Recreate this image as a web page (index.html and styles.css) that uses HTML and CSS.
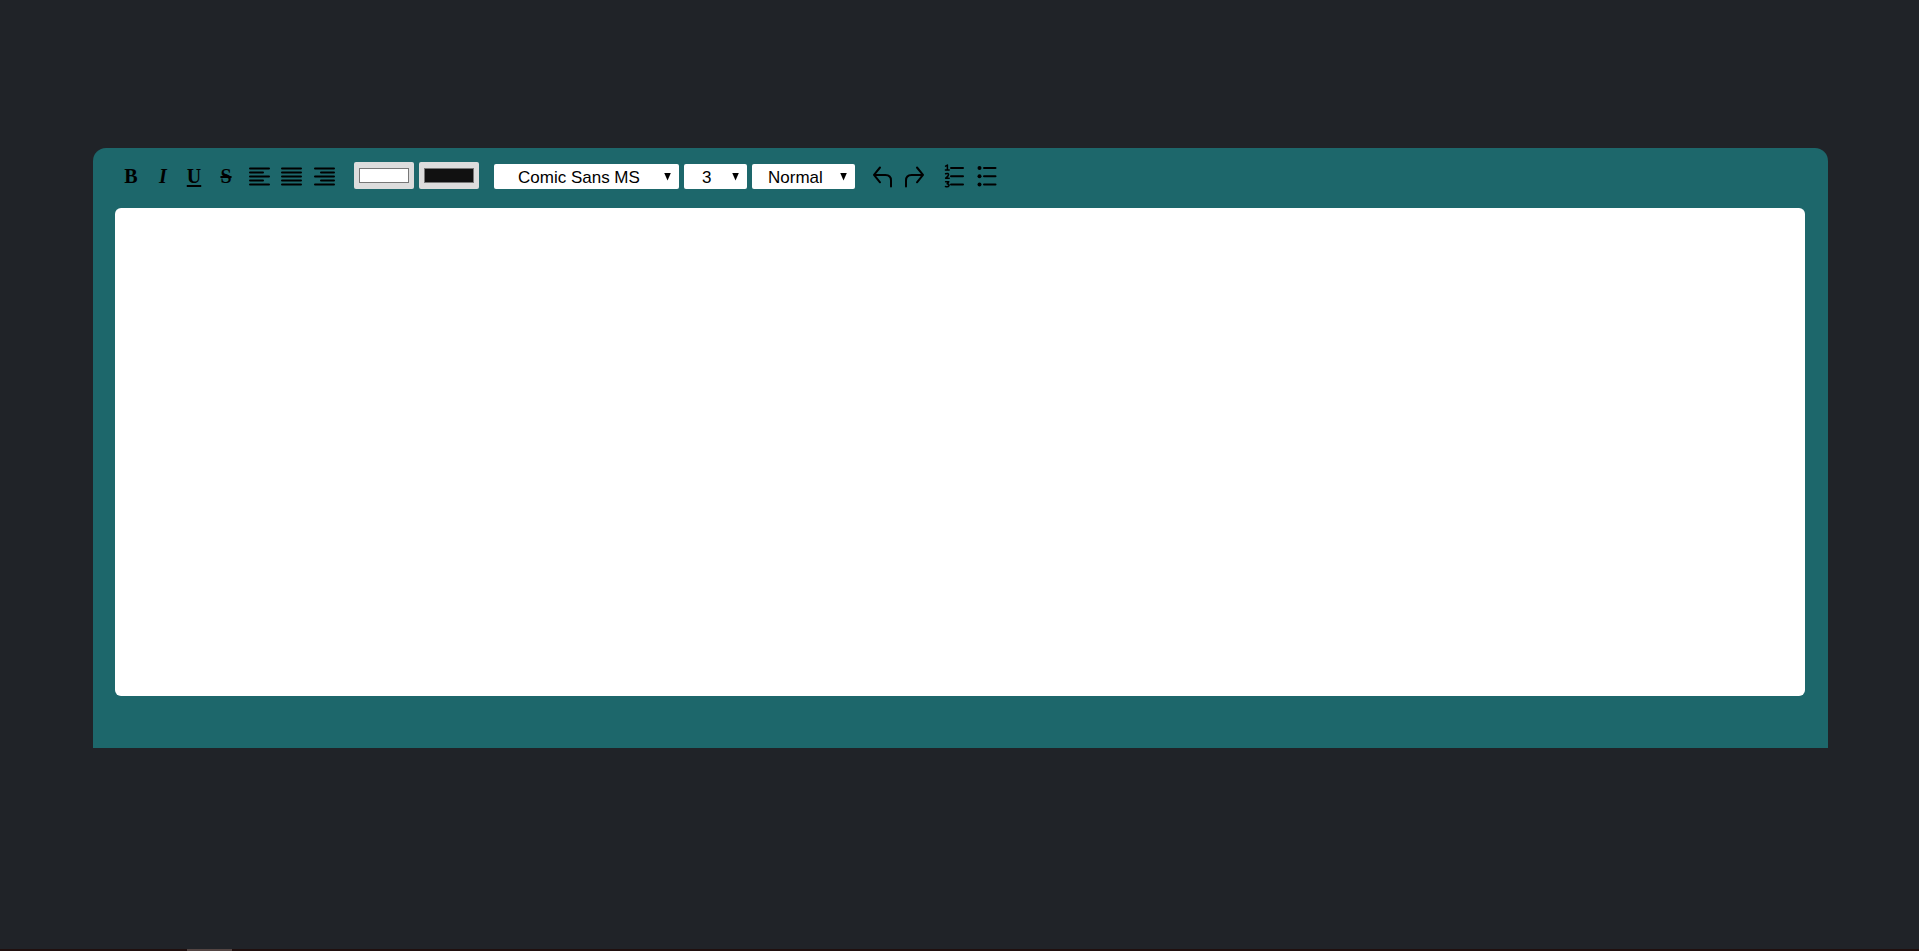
FILE: index.html
```html
<!DOCTYPE html>
<html lang="en">
<head>
<meta charset="utf-8">
<title>Text Editor</title>
<meta name="viewport" content="width=device-width, initial-scale=1">
<link rel="stylesheet" href="styles.css">
</head>
<body>
<main class="editor">
  <div class="toolbar" role="toolbar" aria-label="Formatting">
    <div class="group">
      <button class="tool bold" type="button" aria-label="Bold">B</button>
      <button class="tool italic" type="button" aria-label="Italic">I</button>
      <button class="tool underline" type="button" aria-label="Underline">U</button>
      <button class="tool strike" type="button" aria-label="Strikethrough">S</button>
      <button class="tool" type="button" aria-label="Align left"><svg viewBox="0 0 24 24"><path d="M3 4.5h19M3 8.5h13M3 12.5h19M3 16.5h13M3 20.5h19"/></svg></button>
      <button class="tool" type="button" aria-label="Justify"><svg viewBox="0 0 24 24"><path d="M3 4.5h19M3 8.5h19M3 12.5h19M3 16.5h19M3 20.5h19"/></svg></button>
      <button class="tool" type="button" aria-label="Align right"><svg viewBox="0 0 24 24"><path d="M4 4.5h19M10 8.5h13M4 12.5h19M10 16.5h13M4 20.5h19"/></svg></button>
    </div>
    <div class="group colors">
      <input class="color" type="color" value="#ffffff" aria-label="Background color">
      <input class="color" type="color" value="#111111" aria-label="Text color">
    </div>
    <div class="group menus">
      <span class="menu font"><select aria-label="Font"><option>Comic Sans MS</option><option>Arial</option><option>Times New Roman</option></select></span>
      <span class="menu size"><select aria-label="Font size"><option>3</option><option>4</option><option>5</option></select></span>
      <span class="menu format"><select aria-label="Format"><option>Normal</option><option>Heading</option></select></span>
    </div>
    <div class="group history">
      <button class="tool" type="button" aria-label="Undo"><svg viewBox="0 0 24 24"><path d="M9 3.5L3 10.9L9 18.3M3.3 10.9H14.5Q20 10.9 20 16.4V22.5"/></svg></button>
      <button class="tool" type="button" aria-label="Redo"><svg viewBox="0 0 24 24"><path d="M14 3.5L20 10.9L14 18.3M19.7 10.9H8.5Q3 10.9 3 16.4V22.5"/></svg></button>
    </div>
    <div class="group lists">
      <button class="tool" type="button" aria-label="Numbered list"><svg viewBox="0 0 24 24"><path d="M8 4h12M8 12.2h12M8 20.4h12"/><path class="fine" d="M2.6 2.2L4.4 1V5.6M2.4 5.9H6.2M2.6 9.8Q5.6 8.8 5.6 10.7Q5.4 12.2 2.7 14.2H6.2M2.6 17.8H5.8L4.2 19.8Q6.2 20 6 21.6Q5.2 23.2 2.5 22.5"/></svg></button>
      <button class="tool" type="button" aria-label="Bulleted list"><svg viewBox="0 0 24 24"><path d="M9 4h11.5M9 12.2h11.5M9 20.4h11.5"/><g class="dots"><circle cx="4.5" cy="4" r="2"/><circle cx="4.5" cy="12.2" r="2"/><circle cx="4.5" cy="20.4" r="2"/></g></svg></button>
    </div>
  </div>
  <div class="page" contenteditable="true" role="textbox" aria-label="Document"></div>
</main>
<footer class="strip"><span class="thumb"></span></footer>
</body>
</html>
```
FILE: styles.css
```css
* { box-sizing: border-box; }

body {
  margin: 0;
  min-height: 100vh;
  display: flex;
  flex-direction: column;
  background: #202328;
  font-family: "Liberation Sans", Arial, sans-serif;
}

.editor {
  margin: 148px 91px 0 93px;
  padding: 0 23px 52px 22px;
  background: #1d676b;
  border-radius: 13px 13px 0 0;
}

.toolbar {
  display: flex;
  align-items: center;
  height: 60px;
  padding-bottom: 4px;
}

.group {
  display: flex;
  align-items: center;
}

.tool {
  width: 32px;
  height: 32px;
  padding: 0;
  border: 0;
  background: none;
  color: #000;
  font: bold 20px/30px "Liberation Serif", "Times New Roman", serif;
  text-align: center;
  cursor: pointer;
}

.italic { font-style: italic; }

.underline {
  width: 30px;
  text-decoration: underline 2px;
  text-underline-offset: 2px;
}

.strike {
  width: 34px;
  text-decoration: line-through 2px;
}

.tool svg {
  display: block;
  width: 24px;
  height: 24px;
  margin: 0 auto;
  fill: none;
  stroke: #000;
  stroke-width: 2;
  stroke-linecap: round;
  stroke-linejoin: round;
}

.tool .fine { stroke-width: 1.5; }

.tool .dots {
  fill: #000;
  stroke: none;
}

.colors {
  gap: 5px;
  margin-left: 15px;
}

.color {
  width: 60px;
  height: 27px;
  margin: 0 0 1px;
  padding: 0;
  border: 0;
  border-radius: 2px;
  background: #ddd;
}

.color::-webkit-color-swatch-wrapper { padding: 6px 5px; }

.color::-webkit-color-swatch {
  border: 1px solid #777;
  border-radius: 0;
}

.menus {
  gap: 5px;
  margin-left: 15px;
}

.menu {
  position: relative;
  height: 25px;
}

.menu::after {
  content: "";
  position: absolute;
  top: 9px;
  right: 8px;
  width: 7px;
  height: 8px;
  background: #000;
  clip-path: polygon(0 0, 100% 0, 50% 100%);
  pointer-events: none;
}

.menu select {
  appearance: none;
  width: 100%;
  height: 100%;
  margin: 0;
  padding: 2px 0 0 16px;
  border: 0;
  border-radius: 2px;
  background: #fff;
  color: #000;
  font: 17px/24px "Liberation Sans", Arial, sans-serif;
}

.menu.font select { padding-left: 24px; }
.menu.size select { padding-left: 18px; }

.font { width: 185px; }
.size { width: 63px; }
.format { width: 103px; }

.history { margin-left: 12px; }
.lists { margin-left: 8px; }

.page {
  height: 488px;
  background: #fff;
  border-radius: 6px;
  outline: 0;
}

.strip {
  height: 2px;
  margin-top: auto;
  padding-left: 187px;
  background: #200f0e;
}

.thumb {
  display: block;
  width: 45px;
  height: 2px;
  background: #544543;
}
```
